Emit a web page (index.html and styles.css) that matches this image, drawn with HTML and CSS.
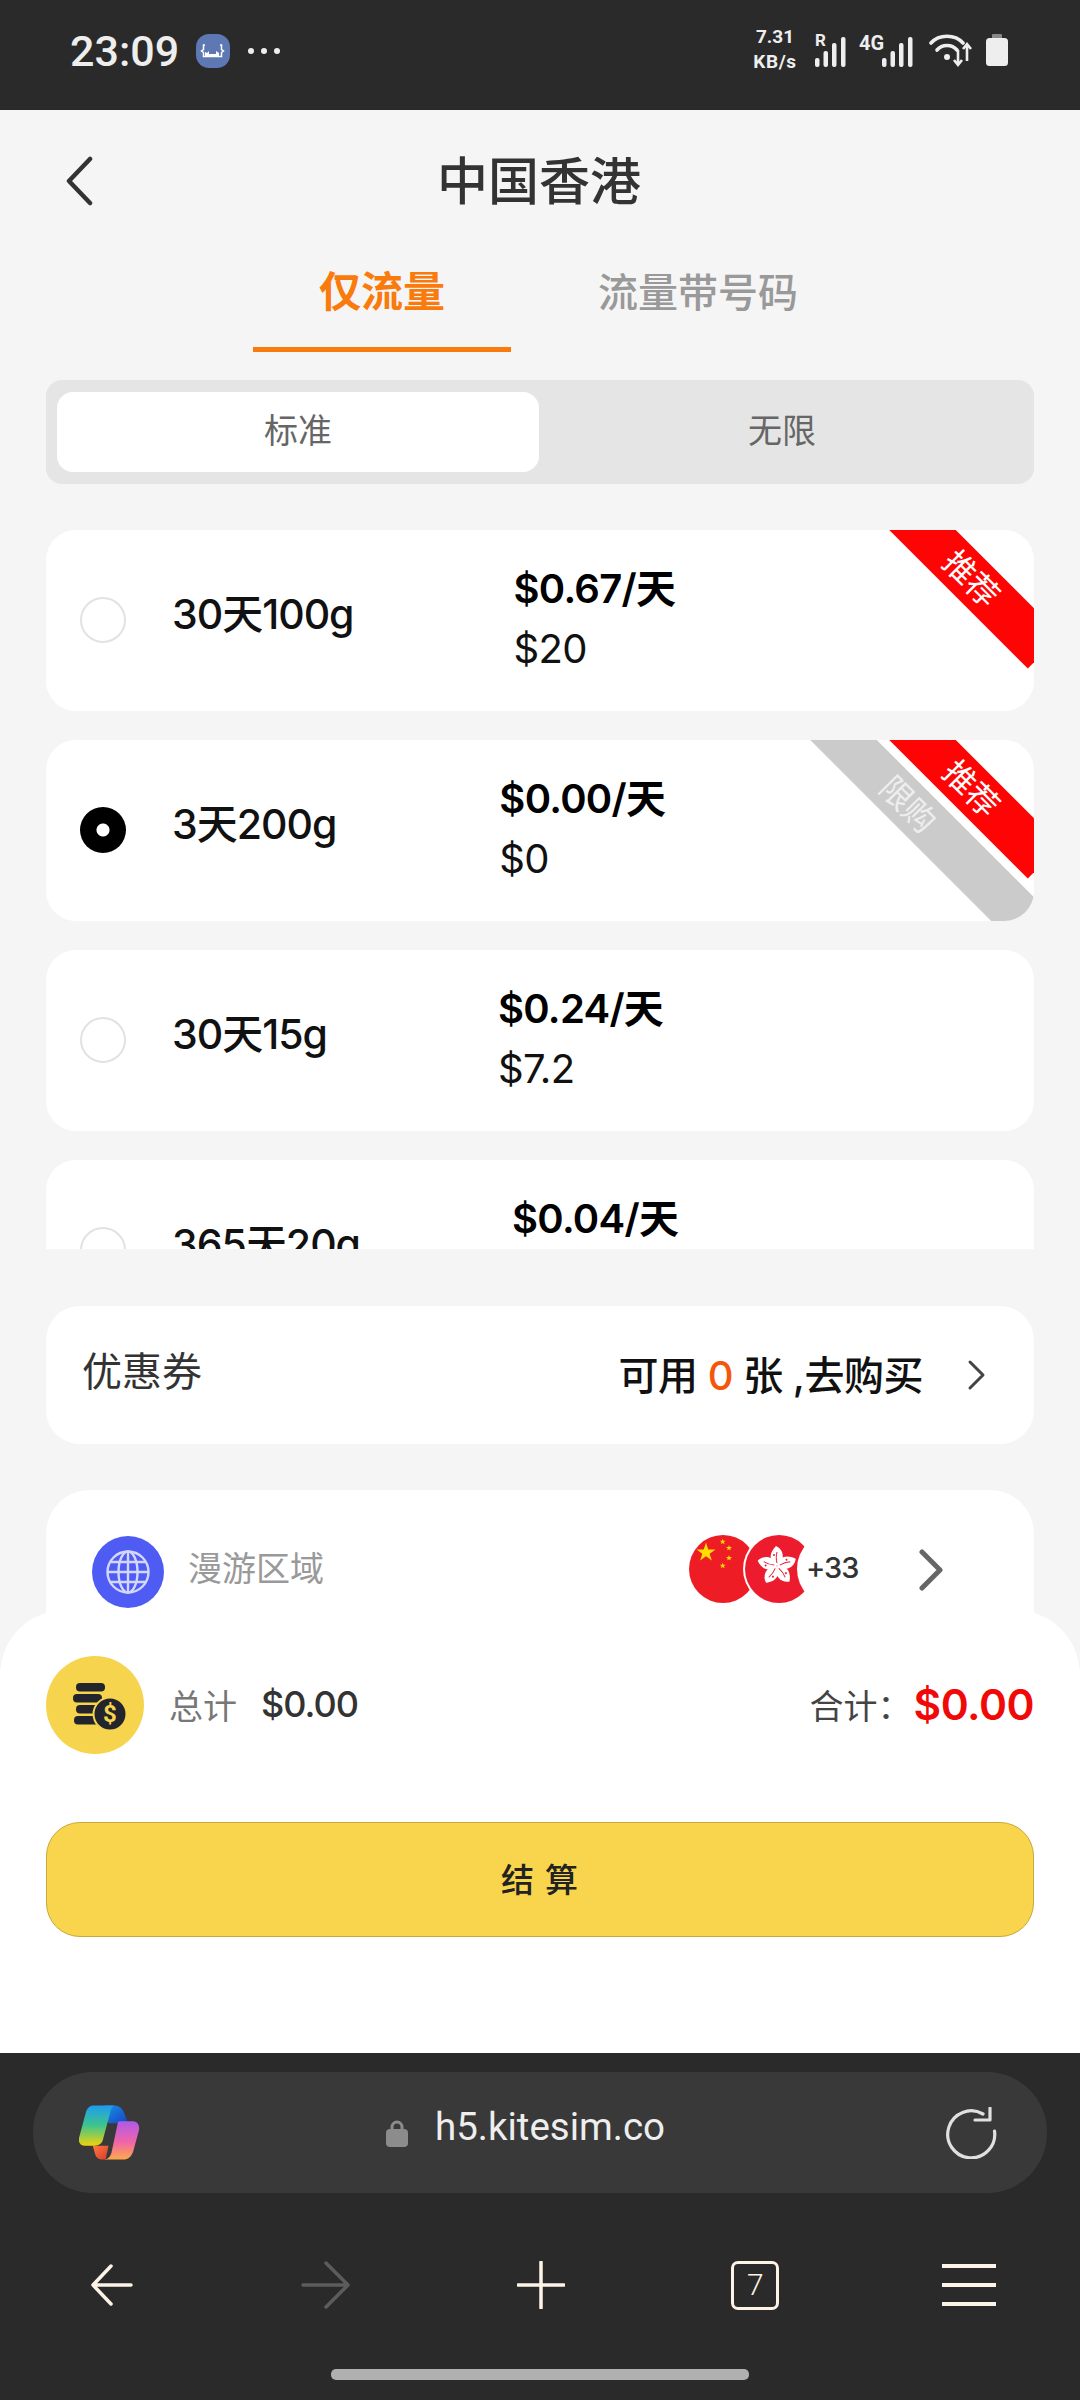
FILE: index.html
```html
<!DOCTYPE html>
<html lang="zh">
<head>
<meta charset="utf-8">
<title>中国香港</title>
<link rel="stylesheet" href="styles.css">
</head>
<body>
<div class="app">
  <div class="status">
    <div class="status-left">
      <span class="time">23:09</span>
      <svg class="app-badge" viewBox="0 0 34 34"><rect width="34" height="34" rx="13" fill="#5e78b4"/><path d="M9 11h-1.500v4.500l-2 1.500 2 1.500v4h18v-4l2-1.500-2-1.500v-4.500h-1.500" fill="none" stroke="#fff" stroke-width="1.500"/><path d="M9 22v-4l2 1 2-2v3h7v-3l3 2v3z" fill="#fff"/></svg>
      <span class="dots"><i></i><i></i><i></i></span>
    </div>
    <div class="status-right">
      <div class="speed"><span>7.31</span><span class="speed-unit">KB/s</span></div>
      <div class="signal">
        <span class="net net-r">R</span>
        <svg class="bars" viewBox="0 0 32 30"><g fill="#eee"><rect x="0" y="21" width="4.500" height="9" rx="2"/><rect x="8.500" y="14" width="4.500" height="16" rx="2"/><rect x="17" y="6" width="4.500" height="24" rx="2"/><rect x="26" y="0" width="4.500" height="30" rx="2"/></g></svg>
      </div>
      <div class="signal signal-4g">
        <span class="net">4G</span>
        <svg class="bars" viewBox="0 0 32 30"><g fill="#eee"><rect x="0" y="21" width="4.500" height="9" rx="2"/><rect x="8.500" y="14" width="4.500" height="16" rx="2"/><rect x="17" y="6" width="4.500" height="24" rx="2"/><rect x="26" y="0" width="4.500" height="30" rx="2"/></g></svg>
      </div>
      <svg class="wifi" viewBox="0 0 44 34"><g fill="none" stroke="#eee" stroke-width="3.600" stroke-linecap="round"><path d="M2 9C10 0 26 0 34 9"/><path d="M8 16C13 10 23 10 28 16"/></g><circle cx="18" cy="23" r="3" fill="#eee"/><path d="M29 16v15M25 26l4 5 4-5M38 27V11M34 15l4-5 4 5" fill="none" stroke="#eee" stroke-width="2.600"/></svg>
      <svg class="battery" viewBox="0 0 22 32"><rect x="6" y="0" width="10" height="6" rx="1" fill="#888"/><rect x="0" y="4" width="22" height="28" rx="3.500" fill="#eee"/></svg>
    </div>
  </div>

  <main class="main">
    <header class="topbar">
      <svg class="back" viewBox="0 0 30 50"><path d="M26 3L5 25l21 22" fill="none" stroke="#333" stroke-width="4.500" stroke-linecap="round" stroke-linejoin="round"/></svg>
      <h1 class="title">中国香港</h1>
    </header>

    <nav class="tabs">
      <a class="tab tab-on">仅流量</a>
      <a class="tab tab-off">流量带号码</a>
    </nav>

    <div class="segment">
      <span class="seg seg-on">标准</span>
      <span class="seg">无限</span>
    </div>

    <section class="plans">
      <article class="plan">
        <span class="radio"></span>
        <span class="plan-name">30天100g</span>
        <div class="price p1"><b>$0.67/天</b><span>$20</span></div>
        <span class="ribbon ribbon-red">推荐</span>
      </article>
      <article class="plan">
        <span class="radio radio-on"></span>
        <span class="plan-name">3天200g</span>
        <div class="price p2"><b>$0.00/天</b><span>$0</span></div>
        <span class="ribbon ribbon-grey">限购</span>
        <span class="ribbon ribbon-red">推荐</span>
      </article>
      <article class="plan">
        <span class="radio"></span>
        <span class="plan-name">30天15g</span>
        <div class="price p3"><b>$0.24/天</b><span>$7.2</span></div>
      </article>
      <article class="plan">
        <span class="radio"></span>
        <span class="plan-name">365天20g</span>
        <div class="price p4"><b>$0.04/天</b><span class="price-blank"></span></div>
      </article>
    </section>

    <section class="coupon">
      <span class="coupon-name">优惠券</span>
      <span class="coupon-info">可用 <em>0</em> 张 ,去购买</span>
      <svg class="coupon-arrow" viewBox="0 0 20 32"><path d="M3 3l13 13L3 29" fill="none" stroke="#444" stroke-width="3" stroke-linecap="round" stroke-linejoin="round"/></svg>
    </section>

    <section class="region">
      <svg class="globe" viewBox="0 0 72 72">
        <circle cx="36" cy="36" r="36" fill="#4f5cf4"/>
        <g fill="none" stroke="#d3d7fc" stroke-width="2.400">
          <circle cx="36" cy="36" r="20.500"/>
          <ellipse cx="36" cy="36" rx="9.500" ry="20.500"/>
          <path d="M36 16v40M16 36h40M19 26h34M19 46h34"/>
        </g>
      </svg>
      <span class="region-name">漫游区域</span>
      <div class="flags">
        <svg class="flag flag-cn" viewBox="0 0 68 68">
          <circle cx="34" cy="34" r="34" fill="#ee1c25"/>
          <g fill="#ffde00">
            <path d="M17 7.500l2.240 6.900h7.260l-5.870 4.270 2.240 6.900L17 21.300l-5.870 4.270 2.240-6.900-5.870-4.270h7.260z"/>
            <path d="M33.700 3.700l.7 2.100h2.300l-1.800 1.300.7 2.200-1.900-1.300-1.900 1.300.7-2.200-1.800-1.300H33z"/>
            <path d="M40 10l.7 2.100H43l-1.800 1.300.7 2.200-1.900-1.300-1.900 1.300.7-2.200-1.800-1.300h2.300z"/>
            <path d="M40 20l.7 2.100H43l-1.800 1.300.7 2.200-1.900-1.300-1.900 1.300.7-2.200-1.800-1.300h2.300z"/>
            <path d="M33.700 27.700l.7 2.100h2.300l-1.800 1.300.7 2.200-1.900-1.300-1.900 1.300.7-2.200-1.800-1.300H33z"/>
          </g>
        </svg>
        <svg class="flag flag-hk" viewBox="0 0 72 72">
          <circle cx="36" cy="36" r="36" fill="#fff"/>
          <circle cx="36" cy="36" r="34" fill="#ec1c2e"/>
          <g>
            <g id="petal"><path d="M35 33C25 28 26 20 33 13c7 3 10 13 2 20z" fill="#fff"/><path d="M34 30c-1-4-1-7 0-11" fill="none" stroke="#ec1c2e" stroke-width="1"/><circle cx="31" cy="22" r="1" fill="#ec1c2e"/></g>
            <use href="#petal" transform="rotate(72 34 33)"/>
            <use href="#petal" transform="rotate(144 34 33)"/>
            <use href="#petal" transform="rotate(216 34 33)"/>
            <use href="#petal" transform="rotate(288 34 33)"/>
          </g>
        </svg>
        <span class="flag-more">+33</span>
      </div>
      <svg class="region-arrow" viewBox="0 0 24 42"><path d="M3 3l18 18L3 39" fill="none" stroke="#666" stroke-width="5" stroke-linecap="round" stroke-linejoin="round"/></svg>
    </section>
  </main>

  <section class="checkout">
    <div class="totals">
      <svg class="coins" viewBox="0 0 98 98">
        <circle cx="49" cy="49" r="49" fill="#f7d44e"/>
        <g fill="#23252d">
          <rect x="30" y="27" width="29" height="8.500" rx="4"/>
          <rect x="27" y="38" width="29" height="8.500" rx="4"/>
          <rect x="30" y="49" width="29" height="8.500" rx="4"/>
          <rect x="28" y="60" width="29" height="8.500" rx="4"/>
          <circle cx="64" cy="58" r="16.500" stroke="#f7d44e" stroke-width="2"/>
        </g>
        <text class="coin-sign" x="64" y="66" text-anchor="middle">$</text>
      </svg>
      <span class="sum-label">总计</span>
      <span class="sum-value">$0.00</span>
      <span class="grand-label">合计：</span>
      <span class="grand-value">$0.00</span>
    </div>
    <button class="pay">结 算</button>
  </section>

  <footer class="browser">
    <div class="urlbar">
      <svg class="copilot" viewBox="0 0 62 55">
        <defs>
          <linearGradient id="cpA" x1="0" y1="0" x2="0" y2="1"><stop offset="0" stop-color="#1e9bf0"/><stop offset=".5" stop-color="#3ec58c"/><stop offset="1" stop-color="#f2d30c"/></linearGradient>
          <linearGradient id="cpB" x1="0" y1="0" x2="0" y2="1"><stop offset="0" stop-color="#b05ae8"/><stop offset=".55" stop-color="#f065a8"/><stop offset="1" stop-color="#ffa94a"/></linearGradient>
          <linearGradient id="cpC" x1="0" y1="0" x2="1" y2="1"><stop offset="0" stop-color="#1b8fe8"/><stop offset="1" stop-color="#1545c0"/></linearGradient>
          <linearGradient id="cpD" x1="0" y1="0" x2="1" y2="1"><stop offset="0" stop-color="#ff7a3d"/><stop offset="1" stop-color="#d83a2f"/></linearGradient>
        </defs>
        <path d="M26 0h10c5 0 8 3 10 8l4 10H30z" fill="url(#cpC)"/>
        <path d="M14 41h16l-3 14h-3c-5 0-7-3-8-7z" fill="url(#cpD)"/>
        <path d="M14 0h22c-3 1-4 6-5 10l-7 26c-1 3-4 5-8 5H6c-4 0-7-3-6-8L7 7c1-4 4-7 7-7z" fill="url(#cpA)"/>
        <path d="M41 16h14c4 0 7 4 6 9l-6 22c-2 5-5 8-10 8H26c4-1 6-3 7-7l6-28c0-2 1-4 2-4z" fill="url(#cpB)"/>
      </svg>
      <div class="url">
        <svg class="lock" viewBox="0 0 22 28"><path d="M6 13V8a5 5 0 0110 0v5" fill="none" stroke="#8c8c8c" stroke-width="3"/><rect y="10" width="22" height="18" rx="4" fill="#8c8c8c"/></svg>
        <span class="url-text">h5.kitesim.co</span>
      </div>
      <svg class="reload" viewBox="0 0 52 52"><path d="M49.500 24A23.500 23.500 0 1 1 38 7" fill="none" stroke="#e0e0e0" stroke-width="3.200" stroke-linecap="round"/><path d="M45 1v12H30" fill="none" stroke="#e0e0e0" stroke-width="3.200" stroke-linecap="round" stroke-linejoin="round"/></svg>
    </div>
    <nav class="navrow">
      <svg class="nav-icon" viewBox="0 0 48 48"><path d="M24 5L6 24l18 19M6 24h38" fill="none" stroke="#fdf3e7" stroke-width="3.500" stroke-linecap="round" stroke-linejoin="round"/></svg>
      <svg class="nav-icon nav-fwd" viewBox="0 0 52 48"><path d="M26 2l22 22-22 22M3 24h44" fill="none" stroke="#5c5c5c" stroke-width="3.500" stroke-linecap="round" stroke-linejoin="round"/></svg>
      <svg class="nav-icon" viewBox="0 0 48 48"><path d="M24 1v46M1 24h46" fill="none" stroke="#fdf3e7" stroke-width="3.500" stroke-linecap="round"/></svg>
      <span class="tabcount">7</span>
      <span class="menu"><i></i><i></i><i></i></span>
    </nav>
    <div class="home-pill"></div>
  </footer>
</div>
</body>
</html>
```

FILE: styles.css
```css
* { box-sizing: border-box; }
html, body { margin: 0; padding: 0; }
body {
  width: 1080px;
  height: 2400px;
  background: #f5f5f5;
  font-family: Inter, "Noto Sans CJK SC", sans-serif;
  overflow: hidden;
}
.app {
  position: relative;
  width: 1080px;
  height: 2400px;
  display: flex;
  flex-direction: column;
}

/* status bar */
.status {
  height: 110px;
  flex: none;
  background: #2a2a2a;
  color: #eee;
  display: flex;
  justify-content: space-between;
  padding: 24px 72px 0 70px;
  font-family: Roboto, sans-serif;
}
.status-left { display: flex; align-items: flex-start; height: 54px; }
.time { font-size: 43px; font-weight: 500; line-height: 54px; width: 126px; }
.app-badge { width: 34px; height: 34px; margin-top: 10px; }
.dots { display: flex; gap: 7px; margin: 24px 0 0 18px; }
.dots i { width: 6px; height: 6px; border-radius: 50%; background: #eee; display: block; }
.status-right { display: flex; align-items: flex-start; }
.speed {
  display: flex;
  flex-direction: column;
  align-items: center;
  width: 46px;
  font-size: 19px;
  font-weight: 700;
  line-height: 25px;
  margin-right: 17px;
}
.speed span { white-space: nowrap; }
.speed-unit { letter-spacing: .6px; }
.signal { position: relative; width: 32px; height: 44px; margin-right: 12px; }
.signal-4g { width: 32px; margin-left: 23px; margin-right: 15px; }
.bars { width: 32px; height: 30px; position: absolute; left: 0; top: 13px; }
.signal .net {
  position: absolute;
  top: 8px;
  left: 0;
  font-size: 17px;
  font-weight: 700;
  line-height: 16px;
  white-space: nowrap;
}
.signal-4g .net { left: -23px; top: 10px; font-size: 20px; line-height: 19px; }
.wifi { width: 44px; height: 34px; margin-top: 10px; }
.battery { width: 22px; height: 32px; margin: 10px 0 0 13px; }

/* main scroller */
.main { flex: 1; min-height: 0; overflow: hidden; }
.topbar {
  height: 144px;
  position: relative;
  display: flex;
  align-items: center;
  justify-content: center;
}
.back { position: absolute; left: 64px; top: 46px; width: 30px; height: 50px; }
.title { margin: 0 2px 0 0; font-size: 51px; font-weight: 500; color: #333; line-height: 60px; }
.tabs { height: 98px; display: flex; padding-left: 253px; }
.tab { height: 98px; white-space: nowrap; }
.tab-on {
  width: 258px;
  color: #f97b0e;
  text-align: center;
  border-bottom: 5px solid #f97b0e;
  font-size: 42px;
  font-weight: 700;
  line-height: 76px;
}
.tab-off { padding-left: 87px; font-size: 40px; font-weight: 500; color: #999; line-height: 78px; }
.segment {
  margin: 28px 46px 0;
  height: 104px;
  padding: 12px 11px;
  border-radius: 16px;
  background: #e5e5e5;
  display: flex;
}
.seg {
  flex: none;
  width: 482px;
  height: 80px;
  border-radius: 16px;
  font-size: 34px;
  line-height: 78px;
  text-align: center;
  color: #666;
}
.seg + .seg { margin-left: 2px; }
.seg-on { background: #fff; }

/* plans */
.plans {
  margin: 46px 46px 0;
  height: 719px;
  overflow: hidden;
  display: flex;
  flex-direction: column;
  gap: 29px;
}
.plan {
  position: relative;
  flex: none;
  height: 181px;
  background: #fff;
  border-radius: 30px;
  overflow: hidden;
  display: flex;
  align-items: center;
  padding-left: 34px;
}
.radio {
  flex: none;
  width: 46px;
  height: 46px;
  border-radius: 50%;
  border: 2px solid #e2e2e2;
  background: #fff;
  margin-top: -2px;
}
.radio-on {
  border: 0;
  background: radial-gradient(circle, #fff 0 6px, #000 7px);
}
.plan-name {
  margin-left: 46px;
  font-size: 41px;
  font-weight: 500;
  letter-spacing: -1px;
  color: #111;
  line-height: 56px;
  margin-top: -14px;
  white-space: nowrap;
}
.price { display: flex; flex-direction: column; color: #111; font-size: 40px; line-height: 60px; letter-spacing: -.7px; margin-top: -3px; }
.price b { font-weight: 600; color: #000; font-size: 40px; }
.price-blank { height: 60px; }
.p1 { margin-left: 160px; }
.p2 { margin-left: 163px; }
.p3 { margin-left: 171px; }
.p4 { margin-left: 152px; }
.ribbon {
  position: absolute;
  height: 47px;
  line-height: 47px;
  text-align: center;
  color: #fff;
  font-size: 32px;
  transform: rotate(45deg);
  white-space: nowrap;
}
.ribbon-red { left: 826px; top: 27px; width: 202px; background: #ff0404; padding-right: 5px; }
.ribbon-grey { left: 662px; top: 41px; width: 400px; background: #cbcbcb; color: #eee; }

/* coupon */
.coupon {
  margin: 57px 46px 0;
  height: 138px;
  background: #fff;
  border-radius: 34px;
  display: flex;
  align-items: center;
  padding: 0 47px 0 36px;
}
.coupon-name { font-size: 40px; color: #333; margin-top: -12px; }
.coupon-info { margin-left: auto; font-size: 40px; color: #111; font-weight: 500; white-space: pre; margin-top: -4px; letter-spacing: -.5px; }
.coupon-info em { font-style: normal; color: #f4570c; }
.coupon-arrow { width: 20px; height: 32px; margin-left: 44px; }

/* region */
.region {
  position: relative;
  margin: 46px 46px 0;
  height: 200px;
  background: #fff;
  border-radius: 44px;
  display: flex;
  align-items: flex-start;
  padding: 46px 0 0 46px;
}
.globe { width: 72px; height: 72px; flex: none; }
.region-name { font-size: 34px; color: #999; margin-left: 24px; line-height: 66px; }
.flags { position: absolute; left: 643px; top: 45px; display: flex; align-items: center; height: 68px; }
.flag { display: block; }
.flag-cn { width: 68px; height: 68px; flex: none; }
.flag-hk { width: 72px; height: 72px; margin-left: -14px; flex: none; }
.flag-more {
  position: relative;
  flex: none;
  background: #fff;
  border-radius: 50%;
  width: 74px;
  height: 74px;
  margin-left: -18px;
  padding-left: 9px;
  font-size: 29px;
  font-weight: 500;
  letter-spacing: -1px;
  color: #333;
  line-height: 72px;
  white-space: nowrap;
}
.region-arrow { position: absolute; left: 873px; top: 59px; width: 24px; height: 42px; }

/* checkout sheet */
.checkout {
  position: absolute;
  left: 0;
  right: 0;
  top: 1610px;
  height: 443px;
  background: #fff;
  border-radius: 65px 65px 0 0;
  padding: 46px 46px 0;
}
.totals { display: flex; align-items: center; height: 98px; }
.coins { width: 98px; height: 98px; flex: none; }
.coin-sign { font-family: Roboto, sans-serif; font-size: 24px; font-weight: 700; fill: #f7d44e; }
.sum-label { margin-left: 25px; font-size: 34px; color: #777; margin-top: -2px; }
.sum-value { margin-left: 24px; font-size: 36px; font-weight: 500; letter-spacing: -1px; color: #333; margin-top: -2px; }
.grand-label { margin-left: auto; margin-right: 2px; font-size: 34px; color: #444; margin-top: -2px; }
.grand-value { font-size: 42.500px; font-weight: 600; letter-spacing: -.5px; color: #f10909; margin-top: -2px; }
.pay {
  display: block;
  width: 100%;
  height: 115px;
  margin-top: 68px;
  background: #f8d54d;
  border: 1px solid #c9a93a;
  border-radius: 34px;
  font-family: inherit;
  font-size: 33px;
  font-weight: 500;
  color: #222;
  padding: 0 0 4px;
  letter-spacing: 1px;
}

/* browser chrome */
.browser {
  flex: none;
  height: 347px;
  background: #2a2a2a;
  padding: 19px 33px 0;
  position: relative;
  font-family: Roboto, sans-serif;
}
.urlbar {
  height: 121px;
  border-radius: 60px;
  background: #393939;
  position: relative;
  display: flex;
  align-items: center;
  justify-content: center;
}
.copilot { position: absolute; left: 46px; top: 33px; width: 61px; height: 55px; }
.url { display: flex; align-items: center; margin-right: 29px; }
.lock { width: 22px; height: 28px; margin-right: 27px; }
.url-text { font-size: 38.500px; color: #eee; margin-top: -12px; }
.reload { position: absolute; left: 912px; top: 35px; width: 52px; height: 52px; }
.navrow {
  position: absolute;
  left: 87px;
  top: 207px;
  width: 909px;
  height: 50px;
  display: flex;
  align-items: center;
  justify-content: space-between;
}
.nav-icon { width: 48px; height: 48px; display: block; }
.nav-fwd { width: 52px; }
.tabcount {
  width: 48px;
  height: 49px;
  margin: 0 -2px 0 2px;
  border: 3.500px solid #fdf3e7;
  border-radius: 7px;
  font-size: 30px;
  font-weight: 300;
  line-height: 42px;
  color: #fdf3e7;
  text-align: center;
}
.menu { width: 54px; height: 42px; display: flex; flex-direction: column; justify-content: space-between; }
.menu i { display: block; height: 4px; background: #fdf3e7; }
.home-pill {
  position: absolute;
  left: 331px;
  top: 316px;
  width: 418px;
  height: 11px;
  border-radius: 5px;
  background: #b0b0b0;
}
```
